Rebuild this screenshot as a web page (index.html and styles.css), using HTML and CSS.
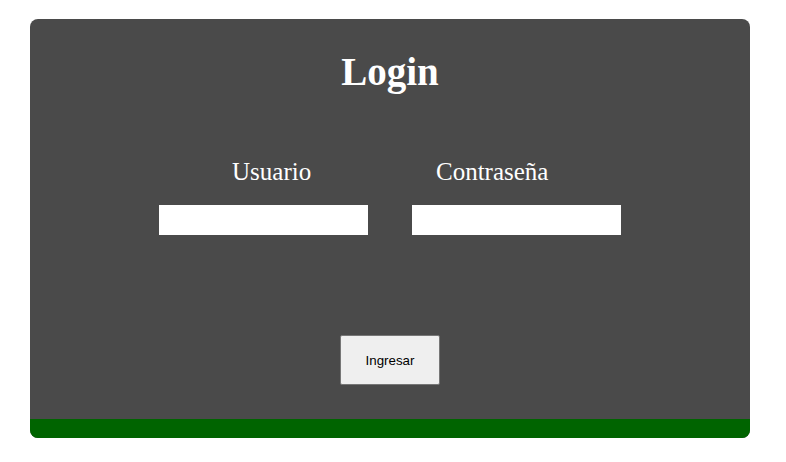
FILE: index.html
```html
<!DOCTYPE html>
<html lang="es">
<head>
<meta charset="utf-8">
<title>Login</title>
<link rel="stylesheet" href="styles.css">
</head>
<body>
<div class="card">
  <div class="card-body">
    <h1 class="title">Login</h1>
    <div class="fields">
      <div class="field field-user">
        <label class="label" for="user">Usuario</label>
        <input class="input" id="user" type="text">
      </div>
      <div class="field field-pass">
        <label class="label" for="pass">Contraseña</label>
        <input class="input" id="pass" type="password">
      </div>
    </div>
    <button class="btn" type="button">Ingresar</button>
  </div>
  <div class="card-footer"></div>
</div>
</body>
</html>
```

FILE: styles.css
```css
html, body {
  margin: 0;
  padding: 0;
  background: #ffffff;
}
body {
  padding: 19px 0 0 30px;
  font-family: "Liberation Serif", "Times New Roman", serif;
}
.card {
  width: 720px;
  height: 419px;
  background: #4a4a4a;
  border-radius: 8px;
  overflow: hidden;
  display: flex;
  flex-direction: column;
}
.card-body {
  flex: 1;
  display: flex;
  flex-direction: column;
  align-items: center;
  padding-top: 31px;
}
.title {
  margin: 0;
  font-size: 39px;
  line-height: 44px;
  font-weight: bold;
  color: #ffffff;
}
.fields {
  display: flex;
  gap: 44px;
  margin-top: 63px;
}
.field {
  display: flex;
  flex-direction: column;
  width: 209px;
}
.label {
  font-size: 25px;
  line-height: 30px;
  color: #ffffff;
}
.field-user .label { padding-left: 73px; }
.field-pass .label { padding-left: 24px; }
.input {
  margin: 18px 0 0;
  width: 209px;
  height: 30px;
  box-sizing: border-box;
  border: none;
  background: #ffffff;
  padding: 0 4px;
}
.btn {
  margin-top: 100px;
  width: 100px;
  height: 50px;
  box-sizing: border-box;
  background: #efefef;
  border: 1px solid #767676;
  border-radius: 2px;
  font-family: "Liberation Sans", Arial, sans-serif;
  font-size: 13.33px;
  color: #000000;
  padding: 0;
}
.card-footer {
  height: 19px;
  background: #006400;
}
```
